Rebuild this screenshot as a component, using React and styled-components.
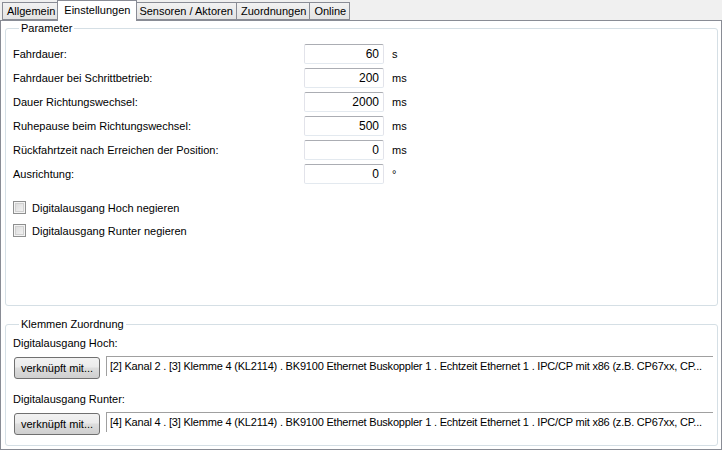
import React from 'react';
import styled, { createGlobalStyle } from 'styled-components';

const GlobalStyle = createGlobalStyle`
  body {
    margin: 0;
    background: #f0f0f0;
    font-family: "Liberation Sans", Arial, sans-serif;
    font-size: 11px;
    color: #000;
  }
`;

const Window = styled.div`
  width: 722px;
  height: 450px;
  display: flex;
  flex-direction: column;
  background: #f0f0f0;
  box-sizing: border-box;
`;

const TabStrip = styled.div`
  display: flex;
  align-items: flex-end;
  height: 20px;
  padding-left: 2px;
  position: relative;
  z-index: 1;
`;

const Tab = styled.div`
  box-sizing: border-box;
  height: ${p => (p.$active ? '21px' : '18px')};
  margin: ${p => (p.$active ? '0 -2px -1px -2px' : '0 0 0 -1px')};
  padding: ${p => (p.$active ? '2px 6px 0' : '1px 3px 0 4px')};
  border: 1px solid #898c95;
  border-bottom: ${p => (p.$active ? 'none' : '1px solid #898c95')};
  background: ${p => (p.$active ? '#fff' : 'linear-gradient(#f2f2f2, #e3e3e3)')};
  position: relative;
  z-index: ${p => (p.$active ? 2 : 1)};
  line-height: 14px;
  white-space: nowrap;
  &:first-child { margin-left: 0; }
`;

const Panel = styled.div`
  flex: 1;
  display: flex;
  flex-direction: column;
  gap: 12px;
  background: #fff;
  border: 1px solid #898c95;
  padding: 1px 3px 3px 4px;
`;

const Group = styled.fieldset`
  margin: 0;
  border: 1px solid #d5dfe5;
  border-radius: 3px;
  padding: ${p => p.$pad};
  flex: ${p => (p.$grow ? 1 : 'none')};
  display: flex;
  flex-direction: column;
  min-width: 0;
`;

const Legend = styled.legend`
  padding: 0 2px;
  margin-left: 6px;
  line-height: 13px;
`;

const Rows = styled.div`
  display: flex;
  flex-direction: column;
  gap: 4px;
`;

const Row = styled.div`
  display: grid;
  grid-template-columns: 283px 80px auto;
  column-gap: 8px;
  align-items: center;
  height: 20px;
`;

const NumBox = styled.div`
  box-sizing: border-box;
  height: 20px;
  border: 1px solid #e2e3ea;
  border-top-color: #abadb3;
  border-bottom-color: #e3e9ef;
  border-radius: 2px;
  text-align: right;
  padding: 0 4px;
  line-height: 18px;
  font-size: 12px;
`;

const Unit = styled.span`
  line-height: 13px;
`;

const Checks = styled.div`
  display: flex;
  flex-direction: column;
  gap: 10px;
  margin-top: 17px;
`;

const CheckRow = styled.label`
  display: flex;
  align-items: center;
  gap: 6px;
  height: 13px;
`;

const Box = styled.span`
  box-sizing: border-box;
  width: 13px;
  height: 13px;
  border: 1px solid #8e8f8f;
  background: linear-gradient(135deg, #d8d8d8, #f6f6f6);
  box-shadow: inset 0 0 0 1px #f4f4f4, inset 0 0 0 2px #d0d0d0;
`;

const FieldLabel = styled.div`
  line-height: 13px;
  margin-bottom: 6px;
`;

const LinkRow = styled.div`
  display: flex;
  align-items: flex-start;
  gap: 6px;
  margin-bottom: ${p => p.$mb || '0'};
`;

const LinkButton = styled.button`
  box-sizing: border-box;
  width: 86px;
  height: 22px;
  margin: 1px 0 0 1px;
  border: 1px solid #707070;
  border-radius: 3px;
  background: linear-gradient(#f2f2f2 0%, #ebebeb 45%, #dddddd 50%, #cfcfcf 100%);
  font-family: inherit;
  font-size: 11px;
  color: #000;
  padding: 0;
`;

const LinkField = styled.div`
  flex: 1;
  box-sizing: border-box;
  height: 20px;
  border-top: 1px solid #a0a0a0;
  border-left: 1px solid #a0a0a0;
  padding: 0 3px;
  line-height: 19px;
  font-size: 11px;
  letter-spacing: -0.2px;
  white-space: nowrap;
  overflow: hidden;
`;

const tabs = ['Allgemein', 'Einstellungen', 'Sensoren / Aktoren', 'Zuordnungen', 'Online'];

const params = [
  ['Fahrdauer:', '60', 's'],
  ['Fahrdauer bei Schrittbetrieb:', '200', 'ms'],
  ['Dauer Richtungswechsel:', '2000', 'ms'],
  ['Ruhepause beim Richtungswechsel:', '500', 'ms'],
  ['Rückfahrtzeit nach Erreichen der Position:', '0', 'ms'],
  ['Ausrichtung:', '0', '°'],
];

const links = [
  ['Digitalausgang Hoch:', '[2] Kanal 2 . [3] Klemme 4 (KL2114) . BK9100 Ethernet Buskoppler 1 . Echtzeit Ethernet 1 . IPC/CP mit x86 (z.B. CP67xx, CP...'],
  ['Digitalausgang Runter:', '[4] Kanal 4 . [3] Klemme 4 (KL2114) . BK9100 Ethernet Buskoppler 1 . Echtzeit Ethernet 1 . IPC/CP mit x86 (z.B. CP67xx, CP...'],
];

const App = () => {
  return (
    <>
      <GlobalStyle />
      <Window>
        <TabStrip>
          {tabs.map(t => (
            <Tab key={t} $active={t === 'Einstellungen'}>{t}</Tab>
          ))}
        </TabStrip>
        <Panel>
          <Group $grow $pad="9px 7px">
            <Legend>Parameter</Legend>
            <Rows>
              {params.map(([label, value, unit]) => (
                <Row key={label}>
                  <span>{label}</span>
                  <NumBox>{value}</NumBox>
                  <Unit>{unit}</Unit>
                </Row>
              ))}
            </Rows>
            <Checks>
              <CheckRow><Box />Digitalausgang Hoch negieren</CheckRow>
              <CheckRow><Box />Digitalausgang Runter negieren</CheckRow>
            </Checks>
          </Group>
          <Group $pad="6px 4px 10px 7px">
            <Legend>Klemmen Zuordnung</Legend>
            {links.map(([label, text], i) => (
              <div key={label}>
                <FieldLabel>{label}</FieldLabel>
                <LinkRow $mb={i === 0 ? '14px' : '0'}>
                  <LinkButton>verknüpft mit...</LinkButton>
                  <LinkField>{text}</LinkField>
                </LinkRow>
              </div>
            ))}
          </Group>
        </Panel>
      </Window>
    </>
  );
};

export default App;
